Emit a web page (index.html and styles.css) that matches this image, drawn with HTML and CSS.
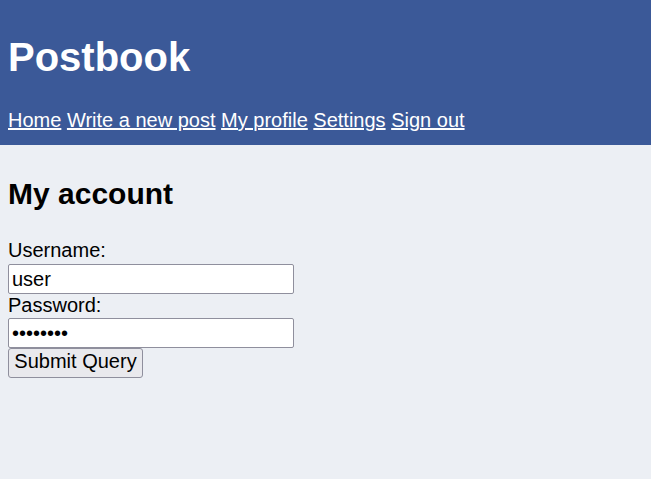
FILE: index.html
```html
<!DOCTYPE html>
<html>
<head>
<meta charset="utf-8">
<link rel="stylesheet" href="styles.css">
<title>Postbook</title>
</head>
<body>
<header class="top">
  <h1 class="brand">Postbook</h1>
  <nav class="nav">
    <a href="#">Home</a>
    <a href="#">Write a new post</a>
    <a href="#">My profile</a>
    <a href="#">Settings</a>
    <a href="#">Sign out</a>
  </nav>
</header>
<main class="content">
  <h2 class="title">My account</h2>
  <form class="form">
    <label class="label" for="u">Username:</label>
    <input class="field field-user" id="u" type="text" value="user">
    <label class="label" for="p">Password:</label>
    <input class="field field-pass" id="p" type="password" value="password">
    <button class="submit" type="button">Submit Query</button>
  </form>
</main>
</body>
</html>
```
FILE: styles.css
```css
html, body {
  margin: 0;
  padding: 0;
}
body {
  background: #eceff4;
  font-family: "Liberation Sans", Arial, sans-serif;
  font-size: 20px;
  color: #000;
  height: 479px;
}
.top {
  background: #3b5998;
  color: #fff;
  padding: 34px 8px 0 8px;
  height: 111px;
}
.brand {
  margin: 0;
  font-size: 40px;
  line-height: 46px;
  font-weight: bold;
}
.nav {
  margin-top: 29px;
  line-height: 23px;
}
.nav a {
  color: #fff;
  text-decoration: underline;
}
.content {
  padding: 31px 8px 0 8px;
}
.title {
  margin: 0;
  font-size: 30px;
  line-height: 35px;
  font-weight: bold;
}
.form {
  margin-top: 28px;
  display: flex;
  flex-direction: column;
  align-items: flex-start;
}
.label {
  display: block;
  line-height: 23px;
}
.field {
  box-sizing: border-box;
  width: 286px;
  height: 30px;
  margin: 0;
  padding: 1px 3px;
  border: 1px solid #8f8f9d;
  border-radius: 2px;
  background: #fff;
  font-family: "Liberation Sans", Arial, sans-serif;
  font-size: 20px;
  color: #000;
}
.field-user {
  margin-top: 2px;
}
.field-pass {
  margin-top: 1px;
}
.submit {
  box-sizing: border-box;
  height: 30px;
  width: 135px;
  margin: 0;
  padding: 0 5px 3px 5px;
  border: 1px solid #8f8f9d;
  border-radius: 3px;
  background: #e9e9ed;
  font-family: "Liberation Sans", Arial, sans-serif;
  font-size: 20px;
  line-height: 23px;
  color: #000;
}
```
